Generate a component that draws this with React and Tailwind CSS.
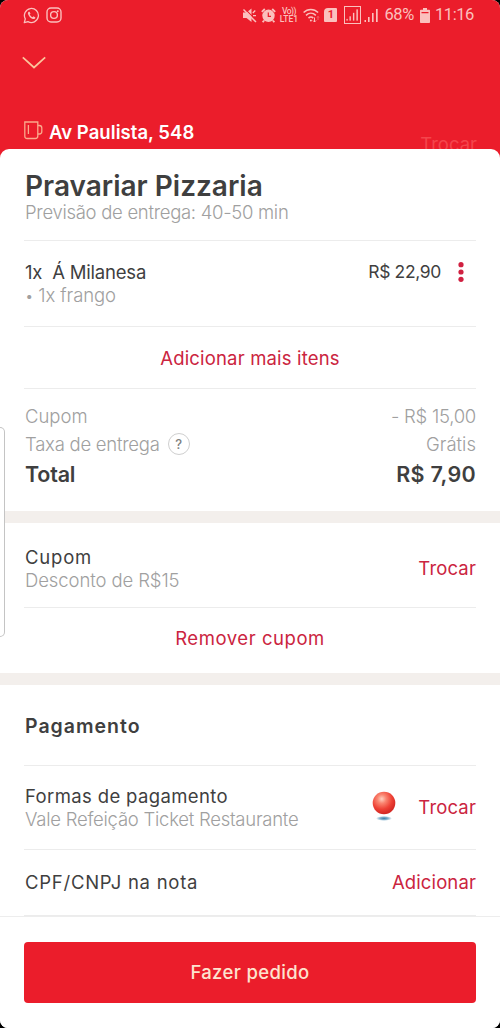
import React from "react";

const Divider = () => <div className="h-px mx-6 bg-[#ececec] shrink-0" />;

const Band = () => <div className="h-3 bg-[#f3efec] shrink-0" />;

const SignalBars = ({ className }) => (
    <svg viewBox="0 0 15 15" className={className} fill="currentColor">
        <rect x="0.5" y="12" width="1.5" height="2" />
        <rect x="4" y="9" width="1.6" height="5" />
        <rect x="8" y="5" width="1.6" height="9" />
        <rect x="12" y="1" width="1.7" height="13" />
    </svg>
);

const StatusBar = () => (
    <div className="h-[30px] flex items-center justify-between pl-[23px] pr-[26px] text-[#fbc0bd]">
        <div className="flex items-center gap-[6px]">
            <svg viewBox="0 0 17 17" className="w-[17px] h-[17px]" fill="none" stroke="currentColor" strokeWidth="1.3">
                <path d="M1.3 15.7l1-3.8a7 7 0 1 1 2.7 2.7z" strokeLinejoin="round" />
                <path
                    d="M5.7 4.7c-.8.6-1 1.5-.6 2.5.9 2.2 2.400 3.900 4.700 4.800 1.200.4 2.400-.2 2.600-1.500L10.500 9.300l-1 1C8.100 9.700 7.300 8.800 6.700 7.600l.8-.9-.9-2z"
                    fill="currentColor"
                    stroke="none"
                />
            </svg>
            <svg viewBox="0 0 16 16" className="w-[16px] h-[16px]" fill="none" stroke="currentColor" strokeWidth="1.4">
                <rect x="1" y="1" width="14" height="14" rx="4" />
                <circle cx="8" cy="8" r="3.4" />
                <circle cx="11.8" cy="4.2" r="0.9" fill="currentColor" stroke="none" />
            </svg>
        </div>
        <div className="flex items-center font-[Roboto]">
            <svg viewBox="0 0 15 15" className="w-[15px] h-[15px]" fill="currentColor">
                <path d="M1 4.500h3.500l5-4v13.500L4.500 10H1z" />
                <path d="M2.600.6l12 12" stroke="#eb1d2b" strokeWidth="1.200" />
                <path d="M1.500 1.500l12.500 12.500" stroke="currentColor" strokeWidth="1.500" />
                <path d="M11 7.600h3M10.800 5l2.500-2.500" stroke="currentColor" strokeWidth="1.300" />
            </svg>
            <svg viewBox="0 0 15 15" className="w-[15px] h-[15px] ml-[4px]" fill="currentColor">
                <circle cx="7.500" cy="7.800" r="6.200" />
                <path d="M.8 3.800L3.800 1M14.200 3.800L11.200 1M3 12.500l-1.300 1.800M12 12.500l1.300 1.800" stroke="currentColor" strokeWidth="1.800" />
                <path d="M7.300 4.500v3.800h2.700" stroke="#eb1d2b" strokeWidth="1.200" fill="none" />
            </svg>
            <div className="ml-[2px] w-[21px] text-[8.500px] leading-[8px] font-medium text-center">
                <div className="tracking-[-0.5px]">Vo))</div>
                <div>LTE1</div>
            </div>
            <svg viewBox="0 0 17 15" className="w-[17px] h-[15px] ml-[4px]" fill="none" stroke="currentColor" strokeWidth="1.500">
                <path d="M.6 4.600c4-4.200 10.500-4.200 14.500 0M3 7.400c3-3 6.800-3 9.800 0M5.500 10.100c1.500-1.500 3.300-1.500 4.800 0" />
                <path d="M11.500 9.500v4.500M10 12.500l1.500 1.500 1.500-1.500" strokeWidth="1" />
                <path d="M15 12V8.500M14 9.500l1-1 1 1" strokeWidth="0.700" opacity="0.600" />
                <circle cx="7.900" cy="12.400" r="1" fill="currentColor" stroke="none" />
            </svg>
            <div className="ml-[4px] w-[13px] h-[14px] bg-[#fbc0bd] text-[#eb1d2b] text-[11px] leading-[14px] font-bold text-center rounded-tl-[4px] rounded-[1px]">
                1
            </div>
            <div className="ml-[7px] w-[17px] h-[18px] border border-[#fbc0bd] flex items-center justify-center">
                <SignalBars className="w-[13px] h-[14px]" />
            </div>
            <SignalBars className="w-[15px] h-[15px] ml-[3px]" />
            <span className="ml-[5px] text-[16.500px] leading-[20px] tracking-[-0.4px]">68%</span>
            <svg viewBox="0 0 10 15" className="w-[10px] h-[15px] ml-[6px]" fill="currentColor">
                <path d="M3 0h4v1.800h2.200q.8 0 .8.800v11.600q0 .8-.8.800H.8q-.8 0-.8-.8V2.600q0-.8.8-.8H3z" />
                <path d="M1.500 4.700h7" stroke="#eb1d2b" strokeWidth="1.200" />
            </svg>
            <span className="ml-[5px] text-[16.500px] leading-[20px] tracking-[-0.4px]">11:16</span>
        </div>
    </div>
);

const Header = () => (
    <div className="relative h-[161px] bg-[#eb1d2b]">
        <StatusBar />
        <svg viewBox="0 0 24 13" className="w-6 h-[13px] mt-[26px] ml-[22px]" fill="none" stroke="#fbc49c" strokeWidth="1.700">
            <path d="M.8 1.300L12 11.500 23.200 1.300" />
        </svg>
        <div className="mt-[51px] pl-6 flex items-center h-[24px]">
            <svg viewBox="0 0 20 19" className="w-[20px] h-[19px] mb-[4px]" fill="none" stroke="#fba98c" strokeWidth="1.300">
                <path d="M.8 1h13v14q0 2.500-2.500 2.500h-8Q.8 17.500.8 15z" />
                <path d="M13.800 4.500h1.500q2.500 0 2.500 2.500v3.500q0 2.500-2.500 2.500h-1.500M4.400 4v9" />
            </svg>
            <span className="ml-[5px] text-[18.500px] font-semibold text-white tracking-[0.05px]">Av Paulista, 548</span>
        </div>
        <span className="absolute right-[23px] top-[132px] text-[18.500px] leading-[24px] text-[#f4454c]">Trocar</span>
    </div>
);

export default function App() {
    return (
        <div className="w-[500px] h-[1028px] bg-black overflow-hidden font-[Inter,sans-serif] whitespace-nowrap text-[18.500px] leading-6 text-[#3f3f3f]">
            <div className="relative h-full rounded-[8px] overflow-hidden flex flex-col bg-white">
                <div className="h-[149px] shrink-0">
                    <Header />
                </div>
                <div className="relative flex-1 flex flex-col bg-white rounded-t-[9px]">
                    <div className="h-[91px] pl-[25px] pr-6 pt-[20px] shrink-0">
                        <h1 className="text-[28px] leading-[34px] font-semibold">Pravariar Pizzaria</h1>
                        <p className="leading-[19px] text-[#a0a0a0] font-light tracking-[-0.29px]">Previsão de entrega: 40-50 min</p>
                    </div>
                    <Divider />
                    <div className="h-[85px] pl-[25px] pr-6 pt-[19px] flex justify-between shrink-0">
                        <div>
                            <p className="whitespace-pre tracking-[-0.2px]">1x  Á Milanesa</p>
                            <p className="leading-[23px] text-[#a0a0a0] font-light flex gap-[5px] tracking-[-0.1px]">
                                <span className="text-[15px]">•</span>
                                <span>1x frango</span>
                            </p>
                        </div>
                        <div className="flex h-[24px] items-center">
                            <span className="text-[17.500px] tracking-[-0.35px]">R$ 22,90</span>
                            <svg viewBox="0 0 6 20" className="w-[6px] h-[20px] ml-[17px] mr-[12px]" fill="#d02040">
                                <circle cx="3" cy="2.700" r="2.600" />
                                <circle cx="3" cy="10" r="2.600" />
                                <circle cx="3" cy="17.300" r="2.600" />
                            </svg>
                        </div>
                    </div>
                    <Divider />
                    <button className="h-[61px] text-[#cb2440] tracking-[0.17px] shrink-0">Adicionar mais itens</button>
                    <Divider />
                    <div className="h-[122px] pl-[25px] pr-6 pt-[15px] shrink-0">
                        <div className="flex justify-between text-[#a0a0a0] font-light">
                            <span>Cupom</span>
                            <span className="tracking-[-0.25px]">- R$ 15,00</span>
                        </div>
                        <div className="flex justify-between mt-[4px] text-[#a0a0a0] font-light">
                            <div className="flex items-center">
                                <span className="tracking-[-0.25px]">Taxa de entrega</span>
                                <span className="ml-[8px] w-[22px] h-[22px] rounded-full border border-[#cfcfcf] text-[13px] leading-[20px] text-center text-[#808080] font-medium">?</span>
                            </div>
                            <span>Grátis</span>
                        </div>
                        <div className="flex justify-between mt-[6px] text-[21.500px] font-semibold">
                            <span className="tracking-[-0.2px]">Total</span>
                            <span className="tracking-[0.3px]">R$ 7,90</span>
                        </div>
                    </div>
                    <Band />
                    <div className="h-[84px] pl-[25px] pr-6 pt-[22px] flex justify-between shrink-0">
                        <div>
                            <p className="tracking-[0.8px]">Cupom</p>
                            <p className="leading-[22px] text-[#a0a0a0] font-light tracking-[-0.1px]">Desconto de R$15</p>
                        </div>
                        <button className="h-[46px] text-[#cb2440] tracking-[0.15px]">Trocar</button>
                    </div>
                    <Divider />
                    <button className="h-[65px] pb-[5px] text-[#cb2440] tracking-[0.55px] shrink-0">Remover cupom</button>
                    <Band />
                    <h2 className="h-[80px] pl-[25px] leading-[83px] text-[19.500px] font-semibold tracking-[1px] shrink-0">Pagamento</h2>
                    <Divider />
                    <div className="h-[83px] pl-[25px] pr-6 pt-[18px] flex justify-between shrink-0">
                        <div>
                            <p className="tracking-[0.37px]">Formas de pagamento</p>
                            <p className="leading-[22px] text-[#a0a0a0] font-light tracking-[-0.25px]">Vale Refeição Ticket Restaurante</p>
                        </div>
                        <div className="flex h-[46px] items-center">
                            <svg viewBox="0 0 24 30" className="w-6 h-[30px] mr-[22px] mb-[2px]">
                                <defs>
                                    <radialGradient id="ball" cx="40%" cy="32%" r="65%">
                                        <stop offset="0" stopColor="#ffd0c0" />
                                        <stop offset="0.3" stopColor="#fa8570" />
                                        <stop offset="0.7" stopColor="#ee4135" />
                                        <stop offset="1" stopColor="#d52a25" />
                                    </radialGradient>
                                    <radialGradient id="shadow">
                                        <stop offset="0" stopColor="#3f7fa8" />
                                        <stop offset="0.5" stopColor="#7fb0cc" />
                                        <stop offset="1" stopColor="#ffffff" />
                                    </radialGradient>
                                </defs>
                                <ellipse cx="12" cy="27.400" rx="8" ry="2.500" fill="url(#shadow)" />
                                <circle cx="12" cy="12" r="11.300" fill="url(#ball)" />
                            </svg>
                            <button className="text-[#cb2440] tracking-[0.15px]">Trocar</button>
                        </div>
                    </div>
                    <Divider />
                    <div className="h-[65px] pb-px pl-[25px] pr-6 flex justify-between items-center shrink-0">
                        <span className="tracking-[0.75px]">CPF/CNPJ na nota</span>
                        <button className="text-[#cb2440] tracking-[0.12px]">Adicionar</button>
                    </div>
                    <Divider />
                    <div className="flex-1 px-6 pt-[25px] border-t border-[#ededed]">
                        <button className="w-full h-[61px] pb-[2px] rounded-[4px] bg-[#eb1d2b] text-[#fde3cf] font-medium tracking-[0.35px]">Fazer pedido</button>
                    </div>
                </div>
                <div className="absolute -left-px top-[427px] w-[6px] h-[210px] border border-l-0 border-[#c4c4c4] rounded-r-[5px] bg-white" />
            </div>
        </div>
    );
}
